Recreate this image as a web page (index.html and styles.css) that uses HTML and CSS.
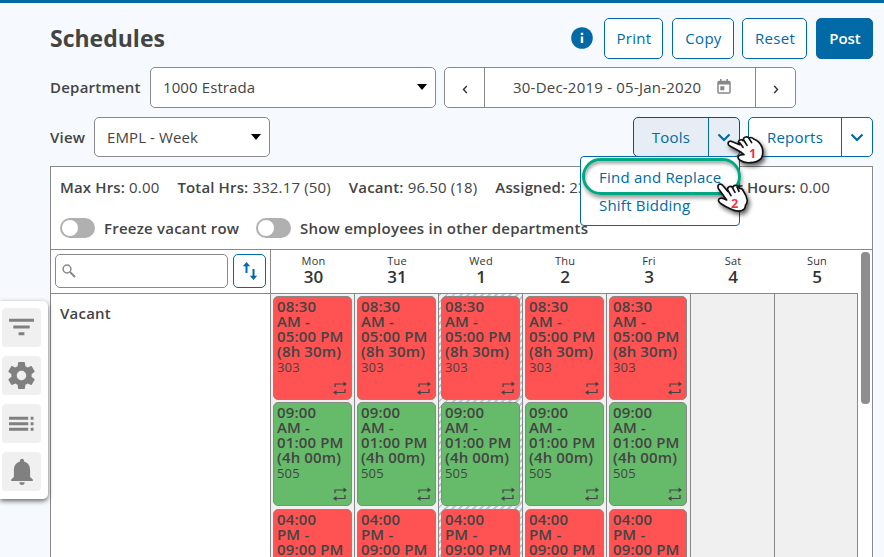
FILE: index.html
```
<!DOCTYPE html>
<html lang="en">
<head>
	<meta charset="UTF-8">
	<title>Schedules</title>
	<link rel="stylesheet" href="styles.css">
</head>
<body>
	<!-- shared icons -->
	<svg class="defs">
		<symbol id="repeat" viewBox="0 0 14 14"><path d="M2 6V3h9M12 8v3.500H3" fill="none" stroke="currentColor" stroke-width="1.200"/><path d="M10.500.5L14 3l-3.500 2.500zM3.500 9L0 11.500 3.500 14z" fill="currentColor"/></symbol>
		<symbol id="chevron" viewBox="0 0 14 9"><path d="M1.500 1.500L7 7l5.500-5.500" fill="none" stroke="currentColor" stroke-width="2.200"/></symbol>
	</svg>

	<div class="page">
		<div class="row top">
			<h1>Schedules</h1>
			<svg class="info" viewBox="0 0 22 22"><circle cx="11" cy="11" r="10.800" fill="#0069a6"/><path d="M9.800 9.500h2.400v6.500H9.800zM9.800 5.700h2.400v2.200H9.800z" fill="#fff"/></svg>
			<button class="btn print">Print</button>
			<button class="btn copy">Copy</button>
			<button class="btn reset">Reset</button>
			<button class="btn post">Post</button>
		</div>

		<div class="row dept">
			<label>Department</label>
			<div class="select select-dept"><span>1000 Estrada</span><i></i></div>
			<div class="dates">
				<span class="arrow"><svg width="6" height="9" viewBox="0 0 6 9"><path d="M4.800 1L1.500 4.500 4.800 8" fill="none" stroke="#333" stroke-width="1.400"/></svg></span>
				<span class="range">30-Dec-2019 - 05-Jan-2020
					<svg width="14" height="15" viewBox="0 0 14 15"><path d="M2 2.500h10q1 0 1 1v9.500q0 1-1 1H2q-1 0-1-1V3.500q0-1 1-1z" fill="none" stroke="#888" stroke-width="1.500"/><path d="M1 2h12v3.500H1zM3 0h1.600v3H3zM9.400 0H11v3H9.400zM3.300 7.300h4v4h-4z" fill="#888"/></svg>
				</span>
				<span class="arrow"><svg width="6" height="9" viewBox="0 0 6 9"><path d="M1.200 1l3.300 3.500L1.200 8" fill="none" stroke="#333" stroke-width="1.400"/></svg></span>
			</div>
		</div>

		<div class="row view">
			<label>View</label>
			<div class="select select-view"><span>EMPL - Week</span><i></i></div>
			<div class="split tools">
				<span class="name">Tools</span><span class="drop"><svg><use href="#chevron"/></svg></span>
				<div class="menu">
					<a class="picked">Find and Replace</a>
					<a>Shift Bidding</a>
				</div>
			</div>
			<div class="split reports">
				<span class="name">Reports</span><span class="drop"><svg><use href="#chevron"/></svg></span>
			</div>
		</div>

		<div class="panel">
			<div class="stats">
				<span><b>Max Hrs:</b> 0.00</span>
				<span><b>Total Hrs:</b> 332.17 (50)</span>
				<span><b>Vacant:</b> 96.50 (18)</span>
				<span><b>Assigned:</b> 235.67</span>
				<span class="last"><b>Over Hours:</b> 0.00</span>
			</div>
			<div class="switches">
				<i class="switch"></i><b class="freeze">Freeze vacant row</b>
				<i class="switch"></i><b class="show">Show employees in other departments</b>
			</div>
			<div class="board">
				<div class="grid">
					<div class="filter">
						<div class="search"><svg width="14" height="14" viewBox="0 0 14 14"><circle cx="5" cy="5" r="3.900" fill="none" stroke="#888" stroke-width="1.500"/><path d="M8 8l5 5" stroke="#888" stroke-width="2"/></svg></div>
						<div class="sort"><svg width="16" height="20" viewBox="0 0 16 20"><path d="M4.500 12V4M11.500 8v8" stroke="#0069a6" stroke-width="2" fill="none"/><path d="M.8 5.300L4.500 1l3.700 4.300zM7.800 14.700l3.700 4.300 3.700-4.300z" fill="#0069a6"/></svg></div>
					</div>
					<div class="day">Mon<b>30</b></div>
					<div class="day">Tue<b>31</b></div>
					<div class="day">Wed<b>1</b></div>
					<div class="day">Thu<b>2</b></div>
					<div class="day">Fri<b>3</b></div>
					<div class="day">Sat<b>4</b></div>
					<div class="day">Sun<b>5</b></div>

					<div class="who">Vacant</div>
					<div class="cell">
						<div class="card red">08:30<br>AM -<br>05:00 PM<br>(8h 30m)<em>303</em><svg><use href="#repeat"/></svg></div>
						<div class="card green">09:00<br>AM -<br>01:00 PM<br>(4h 00m)<em>505</em><svg><use href="#repeat"/></svg></div>
						<div class="card red">04:00<br>PM -<br>09:00 PM</div>
					</div>
					<div class="cell">
						<div class="card red">08:30<br>AM -<br>05:00 PM<br>(8h 30m)<em>303</em><svg><use href="#repeat"/></svg></div>
						<div class="card green">09:00<br>AM -<br>01:00 PM<br>(4h 00m)<em>505</em><svg><use href="#repeat"/></svg></div>
						<div class="card red">04:00<br>PM -<br>09:00 PM</div>
					</div>
					<div class="cell holiday">
						<div class="card red">08:30<br>AM -<br>05:00 PM<br>(8h 30m)<em>303</em><svg><use href="#repeat"/></svg></div>
						<div class="card green">09:00<br>AM -<br>01:00 PM<br>(4h 00m)<em>505</em><svg><use href="#repeat"/></svg></div>
						<div class="card red">04:00<br>PM -<br>09:00 PM</div>
					</div>
					<div class="cell">
						<div class="card red">08:30<br>AM -<br>05:00 PM<br>(8h 30m)<em>303</em><svg><use href="#repeat"/></svg></div>
						<div class="card green">09:00<br>AM -<br>01:00 PM<br>(4h 00m)<em>505</em><svg><use href="#repeat"/></svg></div>
						<div class="card red">04:00<br>PM -<br>09:00 PM</div>
					</div>
					<div class="cell fri">
						<div class="card red">08:30<br>AM -<br>05:00 PM<br>(8h 30m)<em>303</em><svg><use href="#repeat"/></svg></div>
						<div class="card green">09:00<br>AM -<br>01:00 PM<br>(4h 00m)<em>505</em><svg><use href="#repeat"/></svg></div>
						<div class="card red">04:00<br>PM -<br>09:00 PM</div>
					</div>
					<div class="cell"></div>
					<div class="cell end"></div>
				</div>
				<div class="scroll"></div>
			</div>
		</div>
	</div>

	<div class="side">
		<span><svg viewBox="0 0 26 26"><path d="M0 4.500h26v3H0zM4.500 11.500h17v3h-17zM10 18.500h6v3h-6z"/></svg></span>
		<span><svg class="gear" viewBox="2 2 20 20"><path d="M19.430 12.980c.04-.32.070-.64.070-.98s-.03-.66-.07-.98l2.110-1.650c.19-.15.240-.42.120-.64l-2-3.460c-.12-.22-.39-.3-.61-.22l-2.490 1c-.52-.4-1.080-.73-1.690-.98l-.38-2.650C14.460 2.180 14.250 2 14 2h-4c-.25 0-.46.180-.49.420l-.38 2.650c-.61.250-1.170.590-1.690.980l-2.490-1c-.23-.09-.49 0-.61.220l-2 3.460c-.13.220-.07.490.120.640l2.110 1.650c-.04.320-.07.650-.07.980s.030.660.070.980l-2.110 1.650c-.19.150-.24.420-.12.640l2 3.460c.12.220.390.300.610.220l2.490-1c.52.400 1.080.730 1.690.980l.38 2.650c.03.240.240.420.490.420h4c.25 0 .46-.18.490-.42l.38-2.650c.61-.25 1.170-.59 1.690-.98l2.490 1c.23.090.490 0 .61-.22l2-3.460c.12-.22.070-.49-.12-.64l-2.110-1.650zM12 15.500c-1.930 0-3.500-1.570-3.500-3.500s1.570-3.500 3.500-3.500 3.500 1.570 3.500 3.500-1.570 3.500-3.500 3.500z"/></svg></span>
		<span><svg viewBox="0 0 26 26"><path d="M0 5.500h20v3H0zM0 11.200h20v3H0zM0 17h20v3H0zM22.500 5.500h3v3h-3zM22.500 11.200h3v3h-3zM22.500 17h3v3h-3z"/></svg></span>
		<span><svg class="bell" viewBox="3.500 2 17 20"><path d="M12 22c1.100 0 2-.9 2-2h-4c0 1.100.890 2 2 2zm6-6v-5c0-3.070-1.640-5.640-4.500-6.320V4c0-.83-.67-1.500-1.500-1.500s-1.500.670-1.500 1.500v.680C7.630 5.360 6 7.920 6 11v5l-2 2v1h16v-1l-2-2z"/></svg></span>
	</div>

	<!-- step pointers -->
	<svg class="hand hand1" viewBox="0 0 120 100"><path d="M10 34q-9-5-6-12 4-6 12-2l22 9q-7-9-1-13 7-4 11 1 1-10 8-11 6-2 10 3 8-4 14 3 19 7 26 27 4 19-3 31-13 13-32 13-19 2-32-7-8-6-5-12 5-6 17-5L40 50z"/><path d="M38 23l10 14M50 15l10 16M66 10l8 13" fill="none"/><text x="66" y="68">1</text></svg>
	<svg class="hand hand2" viewBox="0 0 120 100"><path d="M8 21q-5-9 1-14 7-3 12 4l14 17q-3-10 4-14 6-3 11 2 4-8 12-5 7 1 8 8 9-1 12 8 10 14 12 28-1 10-6 16 1 9-9 14-15 6-33-3-19-8-34-19-8-7-2-13 8-5 22 4z"/><path d="M35 24l10 17M49 16l8 15M63 15l6 13" fill="none"/><text x="45" y="77">2</text></svg>
</body>
</html>
```
FILE: styles.css
```
*{box-sizing:border-box;}
body{margin:0;height:557px;overflow:hidden;background:#f6fafe;border-top:3px solid #0069a6;color:#444;font:15px/20px "Open Sans","Noto Sans",sans-serif;letter-spacing:.22px;}
h1{margin:-2px auto 0 0;font-size:23px;line-height:32px;font-weight:700;letter-spacing:0;}
b,label{font-weight:600;}
.defs{position:absolute;width:0;height:0;}

.page{padding:15px 11px 0 50px;}
.row{display:flex;align-items:center;}
.top{height:41px;}
.info{width:22px;height:22px;margin:-2px 11px 0 0;}
.btn{height:41px;padding:0 0 1px 1px;border:1px solid #0069a6;border-radius:5px;background:#fff;color:#0069a6;font:inherit;letter-spacing:.3px;}
.print{width:59px;margin-right:9px;}
.copy{width:62px;margin-right:8px;}
.reset{width:65px;margin-right:9px;}
.post{width:57px;background:#0069a6;color:#fff;font-weight:600;letter-spacing:0;}

.dept{height:41px;margin-top:8px;}
.dept label{width:100px;margin-top:-2px;}
.select{display:flex;align-items:center;justify-content:space-between;padding:0 8px 0 12px;border:1px solid #888;border-radius:5px;background:#fff;letter-spacing:.1px;}
.select i{border:5px solid transparent;border-top:6px solid #000;border-bottom:0;}
.select-dept{width:286px;height:41px;padding-bottom:2px;}
.dates{display:flex;width:352px;height:41px;margin-left:8px;border:1px solid #888;border-radius:5px;background:#fff;}
.dates .arrow{display:flex;width:39px;align-items:center;justify-content:center;padding-top:4px;}
.range{display:flex;flex:1;align-items:center;padding:0 0 2px 28px;border:solid #888;border-width:0 1px;letter-spacing:.22px;}
.range svg{margin-left:16px;}

.view{height:40px;margin-top:9px;}
.view label{width:44px;}
.select-view{width:176px;height:40px;margin-right:auto;}
.split{position:relative;display:flex;height:40px;border:1px solid #0069a6;border-radius:5px;background:#fff;color:#0069a6;}
.split .name{flex:1;line-height:38px;text-align:center;}
.split .drop{display:flex;width:31px;align-items:center;justify-content:center;border-left:1px solid #0069a6;}
.drop svg{width:14px;height:9px;}
.tools{width:107px;margin-right:8px;background:#e6edf4;border-color:#0b4f82;}
.reports{width:125px;}
.menu{position:absolute;z-index:2;top:38px;right:-1px;width:160px;height:70px;border:1px solid #0069a6;border-radius:4px;background:#fff;}
.menu a{display:block;height:28px;padding-left:18px;line-height:26px;}
.menu .picked{width:159px;height:37px;margin:1px 0 0 1px;padding-left:14px;line-height:33px;border:3px solid #00a783;border-radius:19px;box-shadow:1px 3px 4px rgba(0,0,0,.4),inset 1px 3px 3px rgba(0,0,0,.3);}
.menu .picked + a{margin-top:-3px;}

.panel{height:391px;margin-top:9px;overflow:hidden;border:1px solid #888;border-bottom:0;background:#fff;}
.stats{display:flex;gap:18px;height:41px;padding:0 42px 0 9px;line-height:41px;font-size:15px;letter-spacing:.15px;white-space:nowrap;}
.stats .last{margin-left:auto;}
.switches{display:flex;align-items:center;height:41px;padding:0 0 1px 9px;}
.switch{width:35px;height:20px;padding:2px;border-radius:10px;background:#b0b0b0;}
.switch:before{content:"";display:block;width:16px;height:16px;border-radius:50%;background:#fff;}
.freeze{width:152px;margin-left:9px;}
.show{margin-left:9px;}
.board{display:flex;border-top:1px solid #888;}
.grid{display:grid;grid-template-columns:219px repeat(7,84px);grid-template-rows:44px 264px;}
.filter{display:flex;gap:5px;padding:4px;border-bottom:1px solid #888;}
.search,.sort{display:flex;height:34px;align-items:center;border:1px solid #888;border-radius:5px;}
.search{width:173px;padding-left:6px;}
.sort{width:33px;justify-content:center;border-color:#0069a6;}
.day{padding:4px 0 0 2px;border-bottom:1px solid #888;font-size:11px;line-height:14px;text-align:center;letter-spacing:.2px;color:#333;}
.day b{display:block;font-size:17px;line-height:17px;letter-spacing:0;}
.filter + .day{border-left:1px solid #888;}
.who{padding:9px;font-weight:600;}
.cell{padding:2px 2px 0;border-left:1px solid #888;background:#f0f0f0;}
.holiday{background:repeating-linear-gradient(135deg,#bcc8d0 0 2px,#edf1f3 2px 5px);}
.fri{padding-right:3px;}
.end{border-right:1px solid #888;}
.card{position:relative;height:104px;margin-bottom:2.400px;padding:2px 3px;border:1px solid #888;border-radius:5px;font-size:15px;line-height:15px;font-weight:600;letter-spacing:.15px;white-space:nowrap;}
.card em{display:block;margin-top:1px;font-size:13px;font-style:normal;font-weight:400;}
.card svg{position:absolute;right:4px;bottom:4px;width:14px;height:14px;}
.red{background:#ff5252;}
.green{background:#66bb6a;}
.scroll{width:9px;height:152px;margin:2px 0 0 3px;border-radius:4px;background:#8e8e8e;}

.side{position:absolute;left:0;top:301px;display:flex;flex-direction:column;gap:9.300px;width:48px;height:198px;padding:6.500px 0 0 2px;border-radius:0 5px 5px 0;background:#fff;box-shadow:0 2px 5px rgba(0,0,0,.6);}
.side span{display:flex;width:39px;height:39px;align-items:center;justify-content:center;border-radius:4px;background:#f0f0f0;}
.side svg{width:25px;height:26px;fill:#808080;}
.side .gear{width:27px;height:27px;}
.side .bell{width:24px;height:27px;}

.hand{position:absolute;z-index:3;width:40px;height:33.300px;overflow:visible;filter:drop-shadow(2px 3px 2px rgba(0,0,0,.6));}
.hand path{fill:#fff;stroke:#111;stroke-width:5;stroke-linejoin:round;stroke-linecap:round;}
.hand text{fill:#f0343c;font:bold 38px "Open Sans",sans-serif;letter-spacing:0;}
.hand1{left:727px;top:135px;}
.hand2{left:716px;top:182px;}
```
